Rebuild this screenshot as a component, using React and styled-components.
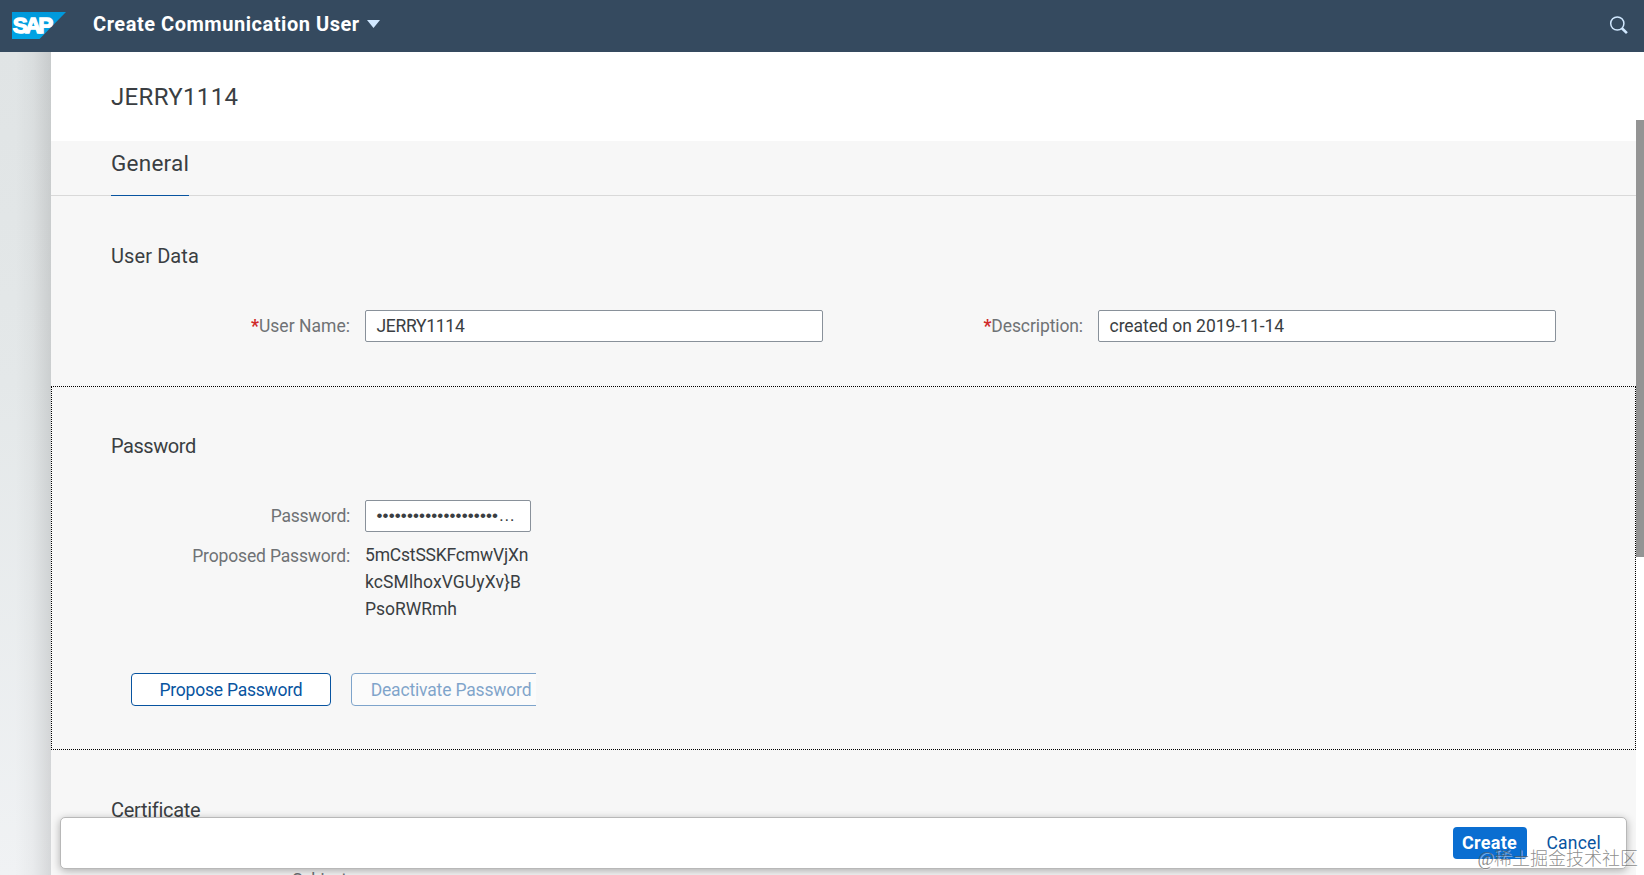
import React from "react";
import styled, {createGlobalStyle} from "styled-components";

const theme = {
  shell: '#354a5f',
  background: '#f7f7f7',
  text: '#3a3e42',
  label: '#6f7275',
  link: '#0854a0',
  primary: '#0a6ed1',
  fieldBorder: '#89919a'
}

const App = () => (
    <Page>
      <GlobalStyle/>
      <ShellBar>
        <Logo viewBox="0 0 54 27">
          <defs>
            <linearGradient id="sapBlue" x1="0" y1="0" x2="0" y2="1">
              <stop offset="0" stopColor="#0098db"/>
              <stop offset="1" stopColor="#00a5e5"/>
            </linearGradient>
          </defs>
          <path d="M0 0h54L27.5 27H0z" fill="url(#sapBlue)"/>
          <text x="0.8" y="21" textLength="40.5" lengthAdjust="spacing">SAP</text>
        </Logo>
        <ShellTitle>Create Communication User</ShellTitle>
        <Caret viewBox="0 0 13 8"><path d="M0 0h13L6.5 8z"/></Caret>
        <SearchIcon viewBox="0 0 20 19">
          <circle cx="8.3" cy="7.5" r="6.6"/>
          <path d="M12.9 12.2l5 4.9" strokeWidth="2.6"/>
        </SearchIcon>
      </ShellBar>
      <Body>
        <Gutter/>
        <Content>
          <ObjectHeader>JERRY1114</ObjectHeader>
          <AnchorBar>
            <Anchor>General</Anchor>
          </AnchorBar>
          <Section $height={190}>
            <SectionTitle $ls={0.1}>User Data</SectionTitle>
            <FormGrid>
              <Field>
                <Label $ls={0.03}><Required>*</Required>User Name:</Label>
                <Input $width={458} $ls={-0.3}>JERRY1114</Input>
              </Field>
              <Field>
                <Label $ls={-0.1}><Required>*</Required>Description:</Label>
                <Input $width={458} $ls={-0.03}>created on 2019-11-14</Input>
              </Field>
            </FormGrid>
          </Section>
          <Section $height={364} $focused>
            <SectionTitle $ls={-0.45}>Password</SectionTitle>
            <Field>
              <Label $ls={-0.25}>Password:</Label>
              <Input $width={166} $masked>{'•'.repeat(20)}…</Input>
            </Field>
            <Field $top>
              <Label $ls={-0.16}>Proposed Password:</Label>
              <Proposed>
                <Line $ls={-0.19}>5mCstSSKFcmwVjXn</Line>
                <Line $ls={0.1}>kcSMlhoxVGUyXv{'}'}B</Line>
                <Line $ls={-0.04}>PsoRWRmh</Line>
              </Proposed>
            </Field>
            <Actions>
              <Button $width={200} $ls={-0.22}>Propose Password</Button>
              <Button $width={200} $ls={-0.17} disabled>Deactivate Password</Button>
            </Actions>
          </Section>
          <Section $height={130}>
            <SectionTitle $ls={-0.3}>Certificate</SectionTitle>
            <Field>
              <Label $ls={-0.6}>Subject:</Label>
            </Field>
          </Section>
        </Content>
        <ScrollTrack>
          <ScrollThumb/>
        </ScrollTrack>
      </Body>
      <FooterBar>
        <Emphasized>Create</Emphasized>
        <Transparent>Cancel</Transparent>
      </FooterBar>
      <Watermark>@稀土掘金技术社区</Watermark>
    </Page>
)

export default App;

const GlobalStyle = createGlobalStyle`
  * {
    box-sizing: border-box;
  }
  body {
    margin: 0;
    overflow: hidden;
    font-family: Roboto, "Liberation Sans", sans-serif;
    font-size: 17.5px;
    color: ${theme.text};
  }
`

const Page = styled.div`
  position: relative;
  display: flex;
  flex-direction: column;
  width: 1644px;
  height: 875px;
  overflow: hidden;
`

const ShellBar = styled.header`
  display: flex;
  flex-shrink: 0;
  height: 52px;
  padding: 0 15px 4px 12px;
  align-items: center;
  background: ${theme.shell};
`

const Logo = styled.svg`
  width: 54px;
  height: 27px;
  margin-top: 3px;

  text {
    font: bold 22.5px "Liberation Sans", sans-serif;
    fill: white;
    stroke: white;
    stroke-width: 1.3px;
  }
`

const ShellTitle = styled.h1`
  margin: 0 0 0 27px;
  font-size: 20px;
  letter-spacing: 0.54px;
  color: white;
`

const Caret = styled.svg`
  width: 13px;
  height: 8px;
  margin-left: 7px;
  fill: #d1e8ff;
`

const SearchIcon = styled.svg`
  width: 20px;
  height: 19px;
  margin: 2px 0 0 auto;
  fill: none;
  stroke: #d1e8ff;
  stroke-width: 1.5;
`

const Body = styled.div`
  display: flex;
  flex: 1;
  min-height: 0;
`

const Gutter = styled.div`
  width: 51px;
  background: linear-gradient(to right, rgba(0, 0, 0, 0) 30%, rgba(0, 0, 0, 0.03) 65%, rgba(0, 0, 0, 0.11)),
    linear-gradient(#e0e4e5, #e4e8e9 40%, #f0f2f4);
`

const Content = styled.main`
  flex: 1;
  overflow: hidden;
  background: ${theme.background};
`

const ObjectHeader = styled.div`
  height: 89px;
  padding-left: 60px;
  font-size: 24px;
  line-height: 91px;
  letter-spacing: 0.34px;
  background: white;
`

const AnchorBar = styled.nav`
  display: flex;
  height: 55px;
  padding-left: 60px;
  border-bottom: 1px solid #d9d9d9;
`

const Anchor = styled.div`
  width: 78px;
  height: 55px;
  font-size: 22.5px;
  line-height: 44px;
  letter-spacing: 0.25px;
  border-bottom: 1px solid ${theme.link};
`

const Section = styled.section`
  height: ${p => p.$height}px;
  padding-top: 48px;
  ${p => p.$focused && `
    outline: 1px dotted #000;
    outline-offset: -1px;
  `}
`

const SectionTitle = styled.h2`
  margin: 0 0 42px 60px;
  font-size: 20px;
  font-weight: 400;
  line-height: 24px;
  letter-spacing: ${p => p.$ls}px;
`

const FormGrid = styled.div`
  display: grid;
  grid-template-columns: 733px 1fr;
`

const Field = styled.div`
  display: flex;
  align-items: ${p => p.$top ? 'flex-start' : 'center'};
  min-height: 32px;
  padding-top: ${p => p.$top ? 9 : 0}px;
`

const Label = styled.div`
  flex: none;
  width: 299px;
  margin-right: 15px;
  text-align: right;
  line-height: 30px;
  letter-spacing: ${p => p.$ls}px;
  color: ${theme.label};
`

const Required = styled.span`
  font-weight: 700;
  color: #d02a2a;
`

const Input = styled.div`
  flex: none;
  width: ${p => p.$width}px;
  height: 32px;
  padding-left: 10.5px;
  line-height: 30px;
  white-space: nowrap;
  letter-spacing: ${p => p.$ls}px;
  border: 1px solid ${theme.fieldBorder};
  border-radius: 2px;
  background: white;
  ${p => p.$masked && `
    font-family: "Liberation Sans", sans-serif;
    font-size: 17px;
    letter-spacing: 0.13px;
  `}
`

const Proposed = styled.div`
  padding: 1px 0;
`

const Line = styled.div`
  line-height: 27px;
  letter-spacing: ${p => p.$ls}px;
`

// the second button runs out of the column and is cut at its edge
const Actions = styled.div`
  display: flex;
  gap: 20px;
  width: 485px;
  margin-top: 49px;
  padding-left: 80px;
  overflow: hidden;
`

const Button = styled.button`
  flex: none;
  width: ${p => p.$width}px;
  height: 33px;
  padding: 0;
  font: inherit;
  letter-spacing: ${p => p.$ls}px;
  color: ${theme.link};
  border: 1px solid ${theme.link};
  border-radius: 4px;
  background: white;

  &:disabled {
    opacity: 0.5;
  }
`

const ScrollTrack = styled.div`
  width: 8px;
  padding-top: 68px;
  background: white;
`

const ScrollThumb = styled.div`
  height: 437px;
  background: #949494;
`

const FooterBar = styled.footer`
  position: absolute;
  left: 60px;
  right: 17px;
  top: 817px;
  display: flex;
  align-items: center;
  justify-content: flex-end;
  height: 52px;
  padding: 0 25px 1px 0;
  border: 1px solid #b8b8b8;
  border-radius: 5px;
  background: white;
  box-shadow: 0 2px 8px rgba(0, 0, 0, 0.3);
`

const Emphasized = styled.button`
  width: 74px;
  height: 32px;
  padding: 0;
  font: 700 18px Roboto, sans-serif;
  letter-spacing: 0.3px;
  color: white;
  border: none;
  border-radius: 4px;
  background: ${theme.primary};
`

const Transparent = styled.button`
  margin-left: 20px;
  padding: 0;
  font: 17.5px Roboto, sans-serif;
  letter-spacing: 0.2px;
  color: ${theme.link};
  border: none;
  background: none;
`

const Watermark = styled.div`
  position: absolute;
  right: 6px;
  bottom: 2px;
  font: 18px/28px "Liberation Serif", "Noto Sans CJK SC", serif;
  font-weight: 300;
  color: rgba(90, 90, 90, 0.7);
  text-shadow: 1px 1px 0 rgba(255, 255, 255, 0.5);
`
